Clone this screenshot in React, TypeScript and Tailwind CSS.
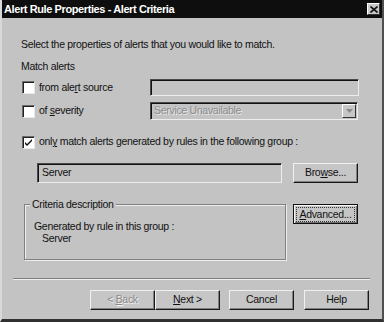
import React from "react";

const font = { fontFamily: "Tahoma, 'Liberation Sans', 'DejaVu Sans', sans-serif" };

function Check({ checked }: { checked?: boolean }) {
  return (
    <div className="w-[13px] h-[13px] bg-white border-t border-l border-t-[#6a6a6a] border-l-[#6a6a6a] border-b border-r border-b-[#e8e8e8] border-r-[#e8e8e8] shadow-[inset_1px_1px_0_#202020] flex items-center justify-center">
      {checked && (
        <svg width="9" height="9" viewBox="0 0 9 9">
          <path d="M1 4 L3 6 L8 1 L8 3 L3 8 L1 6 Z" fill="#111" />
        </svg>
      )}
    </div>
  );
}

function Btn({ children, w = 65, disabled, focus }: { children: React.ReactNode; w?: number; disabled?: boolean; focus?: boolean }) {
  return (
    <div
      className={`h-[20px] flex items-center justify-center bg-[#c6c6c6] ${
        focus
          ? "border border-[#111] shadow-[inset_1px_1px_0_#f4f4f4,inset_-1px_-1px_0_#707070]"
          : "border-t border-l border-t-[#f0f0f0] border-l-[#f0f0f0] border-b border-r border-b-[#1a1a1a] border-r-[#1a1a1a] shadow-[inset_-1px_-1px_0_#808080]"
      } ${disabled ? "text-[#8a8a8a]" : "text-[#111]"}`}
      style={{ width: w }}
    >
      {focus ? (
        <span className="border border-dotted border-[#333] px-[2px] leading-[13px]">{children}</span>
      ) : (
        <span className={disabled ? "[text-shadow:1px_1px_0_#f2f2f2]" : ""}>{children}</span>
      )}
    </div>
  );
}

export default function App() {
  return (
    <div className="w-[384px] h-[322px] bg-[#c3c3c3] text-[#111] text-[10.5px] tracking-[-0.3px] flex flex-col border-l-2 border-l-[#d8d8d8] border-r-2 border-r-[#505050] border-b-[3px] border-b-[#303030] overflow-hidden" style={font}>
      <div className="h-[18px] bg-[#0e0e0e] flex items-center justify-between pl-[2px] pr-[2px] shrink-0">
        <span className="text-white font-bold text-[11px] tracking-[-0.4px] leading-none">Alert Rule Properties - Alert Criteria</span>
        <div className="w-[13px] h-[12px] bg-[#c8c8c8] border-t border-l border-t-white border-l-white border-b border-r border-b-[#333] border-r-[#333] flex items-center justify-center">
          <svg width="8" height="7" viewBox="0 0 8 7">
            <path d="M0.5 0.5 L7.5 6.5 M7.5 0.5 L0.5 6.5" stroke="#111" strokeWidth="1.6" />
          </svg>
        </div>
      </div>

      <div className="flex flex-col pl-[19px] pr-[23px]">
        <div className="mt-[20px] leading-[13px]">Select the properties of alerts that you would like to match.</div>
        <div className="mt-[9px] leading-[13px]">Match alerts</div>

        <div className="mt-[6px] flex items-center h-[17px]">
          <div className="w-[129px] flex items-center gap-[4px] pl-[1px]">
            <Check />
            <span>from ale<u>r</u>t source</span>
          </div>
          <div className="w-[209px] h-[17px] border-t border-l border-t-[#4a4a4a] border-l-[#4a4a4a] border-b border-r border-b-[#eeeeee] border-r-[#eeeeee] shadow-[inset_1px_1px_0_#111]" />
        </div>

        <div className="mt-[6px] flex items-center h-[18px]">
          <div className="w-[129px] flex items-center gap-[4px] pl-[1px]">
            <Check />
            <span>of <u>s</u>everity</span>
          </div>
          <div className="w-[208px] h-[18px] border-t border-l border-t-[#4a4a4a] border-l-[#4a4a4a] border-b border-r border-b-[#eeeeee] border-r-[#eeeeee] shadow-[inset_1px_1px_0_#111] flex items-center justify-between pl-[3px] pr-[1px]">
            <span className="text-[#8c8c8c] [text-shadow:1px_1px_0_#e6e6e6]">Service Unavailable</span>
            <div className="w-[14px] h-[14px] bg-[#c6c6c6] border-t border-l border-t-white border-l-white border-b border-r border-b-[#333] border-r-[#333] flex items-center justify-center">
              <svg width="7" height="4" viewBox="0 0 7 4"><path d="M0 0 H7 L3.5 4 Z" fill="#8a8a8a" /></svg>
            </div>
          </div>
        </div>

        <div className="mt-[15px] flex items-center gap-[4px] pl-[1px] h-[14px]">
          <Check checked />
          <span>onl<u>y</u> match alerts generated by rules in the following group :</span>
        </div>

        <div className="mt-[14px] flex items-center justify-between pl-[16px] pr-[1px]">
          <div className="w-[245px] h-[20px] border-t border-l border-t-[#4a4a4a] border-l-[#4a4a4a] border-b border-r border-b-[#eeeeee] border-r-[#eeeeee] shadow-[inset_1px_1px_0_#111] flex items-center pl-[4px]">
            Server
          </div>
          <Btn>Bro<u>w</u>se...</Btn>
        </div>

        <div className="mt-[21px] flex items-start justify-between pl-[3px] pr-[1px]">
          <div className="relative w-[262px] h-[56px] border border-[#808080] shadow-[1px_1px_0_#eeeeee,inset_1px_1px_0_#eeeeee]">
            <span className="absolute -top-[7px] left-[5px] bg-[#c3c3c3] px-[2px] leading-[13px]">Criteria description</span>
            <div className="pl-[9px] pt-[15px] leading-[12px]">
              <div>Generated by rule in this group :</div>
              <div className="pl-[8px]">Server</div>
            </div>
          </div>
          <Btn focus><u>A</u>dvanced...</Btn>
        </div>

        <div className="mt-[18px] -ml-[8px] mr-[-11px] h-[2px] border-t border-t-[#808080] border-b border-b-[#eeeeee]" />

        <div className="mt-[10px] flex justify-end -mr-[10px]">
          <Btn disabled>&lt; <u>B</u>ack</Btn>
          <Btn><u>N</u>ext &gt;</Btn>
          <div className="w-[9px]" />
          <Btn>Cancel</Btn>
          <div className="w-[10px]" />
          <Btn>Help</Btn>
        </div>
      </div>
    </div>
  );
}
